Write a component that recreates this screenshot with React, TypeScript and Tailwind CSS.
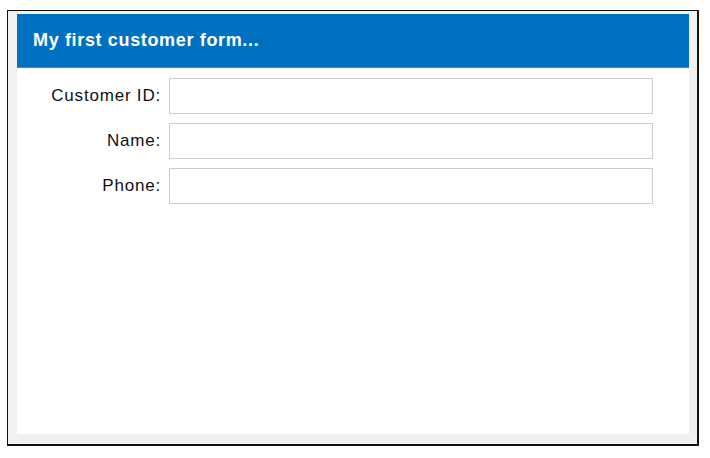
const fields = ["Customer ID:", "Name:", "Phone:"];

export default function App() {
  return (
    <div className="w-[710px] h-[458px] bg-white pt-[10px] pl-[7px] font-['Liberation_Sans',Arial,sans-serif]">
      <div className="w-[692px] h-[436px] border-l border-t border-r-2 border-b-2 border-[#111] bg-[#f1f1f1] pl-[9px] pt-[3px] pr-[8px] pb-[10px]">
        <div className="bg-white h-full flex flex-col">
          {/* title bar */}
          <div className="h-[54px] bg-[#0071c1] border-b border-[#3d8ccc] pl-[16px] flex items-center">
            <span className="text-white font-bold text-[18px] tracking-[0.65px]">
              My first customer form...
            </span>
          </div>

          {/* form */}
          <div className="pt-[10px] grid grid-cols-[144px_484px] gap-x-[8px] gap-y-[9px]">
            {fields.map((f) => (
              <div key={f} className="contents">
                <label className="h-[36px] flex items-center justify-end text-[17px] tracking-[0.8px] text-[#111]">
                  {f}
                </label>
                <input
                  type="text"
                  className="h-[36px] border border-[#cdcdcd] bg-white outline-none px-2"
                />
              </div>
            ))}
          </div>
        </div>
      </div>
    </div>
  );
}
